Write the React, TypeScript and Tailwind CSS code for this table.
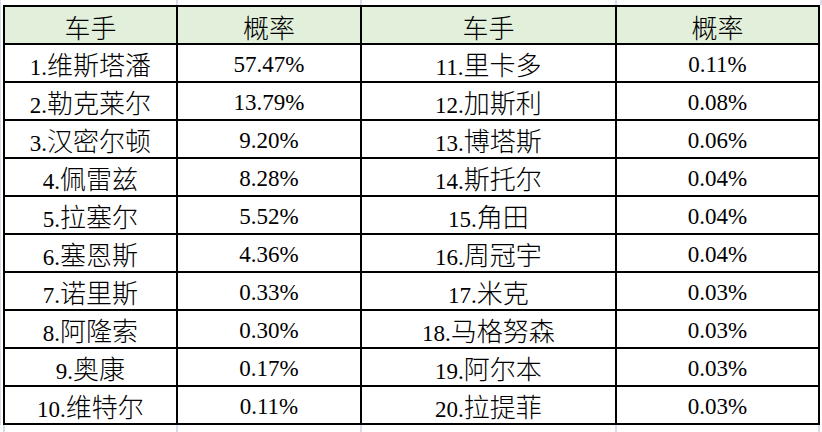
const left = [
  ["1.", "维斯塔潘", "57.47%"],
  ["2.", "勒克莱尔", "13.79%"],
  ["3.", "汉密尔顿", "9.20%"],
  ["4.", "佩雷兹", "8.28%"],
  ["5.", "拉塞尔", "5.52%"],
  ["6.", "塞恩斯", "4.36%"],
  ["7.", "诺里斯", "0.33%"],
  ["8.", "阿隆索", "0.30%"],
  ["9.", "奥康", "0.17%"],
  ["10.", "维特尔", "0.11%"],
];

const right = [
  ["11.", "里卡多", "0.11%"],
  ["12.", "加斯利", "0.08%"],
  ["13.", "博塔斯", "0.06%"],
  ["14.", "斯托尔", "0.04%"],
  ["15.", "角田", "0.04%"],
  ["16.", "周冠宇", "0.04%"],
  ["17.", "米克", "0.03%"],
  ["18.", "马格努森", "0.03%"],
  ["19.", "阿尔本", "0.03%"],
  ["20.", "拉提菲", "0.03%"],
];

const Cell = ({ children, head }: { children: React.ReactNode; head?: boolean }) => (
  <div
    className={`h-[38px] border-r-2 border-b-2 border-black flex items-center justify-center pt-[3px] leading-none text-black ${
      head ? "bg-[#e2efda]" : "bg-white"
    }`}
  >
    {children}
  </div>
);

const Name = ({ num, name }: { num: string; name: string }) => (
  <span className="whitespace-nowrap">
    <span className="text-[23px] [font-family:'Times_New_Roman','Liberation_Serif',serif]">{num}</span>
    <span className="text-[26px] font-light [font-family:'Noto_Sans_CJK_SC',sans-serif]">{name}</span>
  </span>
);

const Pct = ({ v }: { v: string }) => (
  <span className="text-[23px] [font-family:'Times_New_Roman','Liberation_Serif',serif]">{v}</span>
);

const Head = ({ t }: { t: string }) => (
  <span className="text-[26px] font-light [font-family:'Noto_Sans_CJK_SC',sans-serif]">{t}</span>
);

const App = () => {
  return (
    <div className="w-[822px] h-[432px] bg-white overflow-hidden">
      {/* sheet gridlines above the table */}
      <div className="relative h-[5px]">
        <div className="absolute left-0 top-0 h-full w-px bg-[#d6deee]" />
        <div className="absolute left-[176px] top-0 h-full w-[2px] bg-[#d6deee]" />
        <div className="absolute left-[360px] top-0 h-full w-[2px] bg-[#d6deee]" />
        <div className="absolute left-[615px] top-0 h-full w-[2px] bg-[#d6deee]" />
        <div className="absolute left-[820px] top-0 h-full w-[2px] bg-[#d6deee]" />
      </div>

      <div className="flex">
        <div className="w-[3px] border-l border-[#d6deee]" />
        <div className="grid grid-cols-[173px_184px_255px_203px] border-l-2 border-t-2 border-black">
          <Cell head><Head t="车手" /></Cell>
          <Cell head><Head t="概率" /></Cell>
          <Cell head><Head t="车手" /></Cell>
          <Cell head><Head t="概率" /></Cell>
          {left.map((l, i) => {
            const r = right[i];
            return [
              <Cell key={`a${i}`}><Name num={l[0]} name={l[1]} /></Cell>,
              <Cell key={`b${i}`}><Pct v={l[2]} /></Cell>,
              <Cell key={`c${i}`}><Name num={r[0]} name={r[1]} /></Cell>,
              <Cell key={`d${i}`}><Pct v={r[2]} /></Cell>,
            ];
          })}
        </div>
      </div>

      {/* sheet gridlines below the table */}
      <div className="relative h-[10px]">
        <div className="absolute left-[3px] top-0 h-full w-[2px] bg-[#d6deee]" />
        <div className="absolute left-[176px] top-0 h-full w-[2px] bg-[#d6deee]" />
        <div className="absolute left-[360px] top-0 h-full w-[2px] bg-[#d6deee]" />
        <div className="absolute left-[615px] top-0 h-full w-[2px] bg-[#d6deee]" />
        <div className="absolute left-[818px] top-0 h-full w-[2px] bg-[#d6deee]" />
      </div>
    </div>
  );
};

export default App;
